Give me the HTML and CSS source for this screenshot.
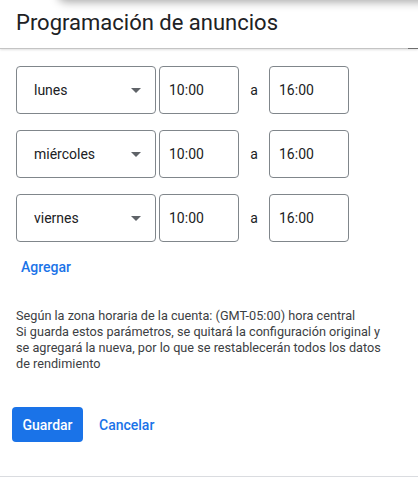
FILE: index.html
```html
<!DOCTYPE html>
<html lang="es">

<head>
    <meta charset="UTF-8">
    <meta name="viewport" content="width=device-width, initial-scale=1.0">
    <title>Programación de anuncios</title>
    <link rel="stylesheet" href="styles.css">
</head>

<body>
    <div class="top-card"></div>

    <div class="dialog">
        <div class="dialog-header">
            <h1>Programación de anuncios</h1>
        </div>

        <div class="schedule">
            <div class="schedule-row">
                <div class="day-select">
                    <span>lunes</span>
                    <span class="arrow"></span>
                </div>
                <div class="time-box">10:00</div>
                <span class="to">a</span>
                <div class="time-box">16:00</div>
            </div>
            <div class="schedule-row">
                <div class="day-select">
                    <span>miércoles</span>
                    <span class="arrow"></span>
                </div>
                <div class="time-box">10:00</div>
                <span class="to">a</span>
                <div class="time-box">16:00</div>
            </div>
            <div class="schedule-row">
                <div class="day-select">
                    <span>viernes</span>
                    <span class="arrow"></span>
                </div>
                <div class="time-box">10:00</div>
                <span class="to">a</span>
                <div class="time-box">16:00</div>
            </div>
        </div>

        <a class="add-link">Agregar</a>

        <p class="note">
            Según la zona horaria de la cuenta: (GMT-05:00) hora central<br>
            Si guarda estos parámetros, se quitará la configuración original y
            se agregará la nueva, por lo que se restablecerán todos los datos
            de rendimiento
        </p>

        <div class="actions">
            <button class="btn-save">Guardar</button>
            <button class="btn-cancel">Cancelar</button>
        </div>
    </div>
</body>

</html>
```

FILE: styles.css
```css
body {
    margin: 0;
    font-family: Roboto, "Liberation Sans", Arial, sans-serif;
    color: #202124;
    background: #fff;
    overflow: hidden;
}

.top-card {
    position: absolute;
    top: -40px;
    left: 58px;
    right: -20px;
    height: 40px;
    border-radius: 8px;
    background: #fff;
    box-shadow: 0 2px 10px rgba(0, 0, 0, 0.35);
}

.dialog {
    width: 418px;
    height: 476px;
    border-bottom: 1px solid #dadce0;
    display: flex;
    flex-direction: column;
}

.dialog-header {
    position: relative;
    height: 48px;
    padding: 0 16px;
    border-bottom: 1px solid #c4c4c4;
    box-shadow: 0 1px 2px rgba(0, 0, 0, 0.12);
    display: flex;
    align-items: center;
}

.dialog-header::after {
    content: "";
    position: absolute;
    right: 0;
    bottom: -1px;
    width: 10px;
    height: 1px;
    background: #6e6e6e;
}

.dialog-header h1 {
    margin: 0;
    margin-top: -4px;
    font-size: 22px;
    font-weight: 400;
    letter-spacing: 0;
}

.schedule {
    display: flex;
    flex-direction: column;
    gap: 16px;
    padding: 17px 16px 0;
}

.schedule-row {
    display: flex;
    align-items: center;
    height: 48px;
}

.day-select,
.time-box {
    box-sizing: border-box;
    height: 48px;
    border: 1px solid #80868b;
    border-radius: 4px;
    display: flex;
    align-items: center;
    font-size: 14px;
}

.day-select {
    width: 140px;
    padding: 0 14px 0 17px;
    justify-content: space-between;
}

.arrow {
    width: 0;
    height: 0;
    border-left: 5px solid transparent;
    border-right: 5px solid transparent;
    border-top: 5px solid #5f6368;
}

.time-box {
    width: 80px;
    margin-left: 3px;
    padding-left: 9px;
}

.to {
    width: 30px;
    text-align: center;
    font-size: 14px;
}

.time-box:last-child {
    margin-left: 0;
}

.add-link {
    margin: 17px 0 0 21px;
    font-size: 14px;
    font-weight: 500;
    color: #1a73e8;
    cursor: pointer;
}

.note {
    margin: 33px 24px 0 16px;
    font-size: 12.7px;
    line-height: 16px;
    color: #3c4043;
}

.actions {
    display: flex;
    align-items: center;
    gap: 8px;
    margin: 35px 0 0 12px;
}

.actions button {
    font-family: Roboto, "Liberation Sans", Arial, sans-serif;
    font-size: 14px;
    font-weight: 500;
    border: none;
    border-radius: 4px;
    height: 35px;
    padding: 0 8px;
    cursor: pointer;
}

.btn-save {
    width: 71px;
    background: #1a73e8;
    color: #fff;
}

.btn-cancel {
    background: none;
    color: #1a73e8;
}
```
